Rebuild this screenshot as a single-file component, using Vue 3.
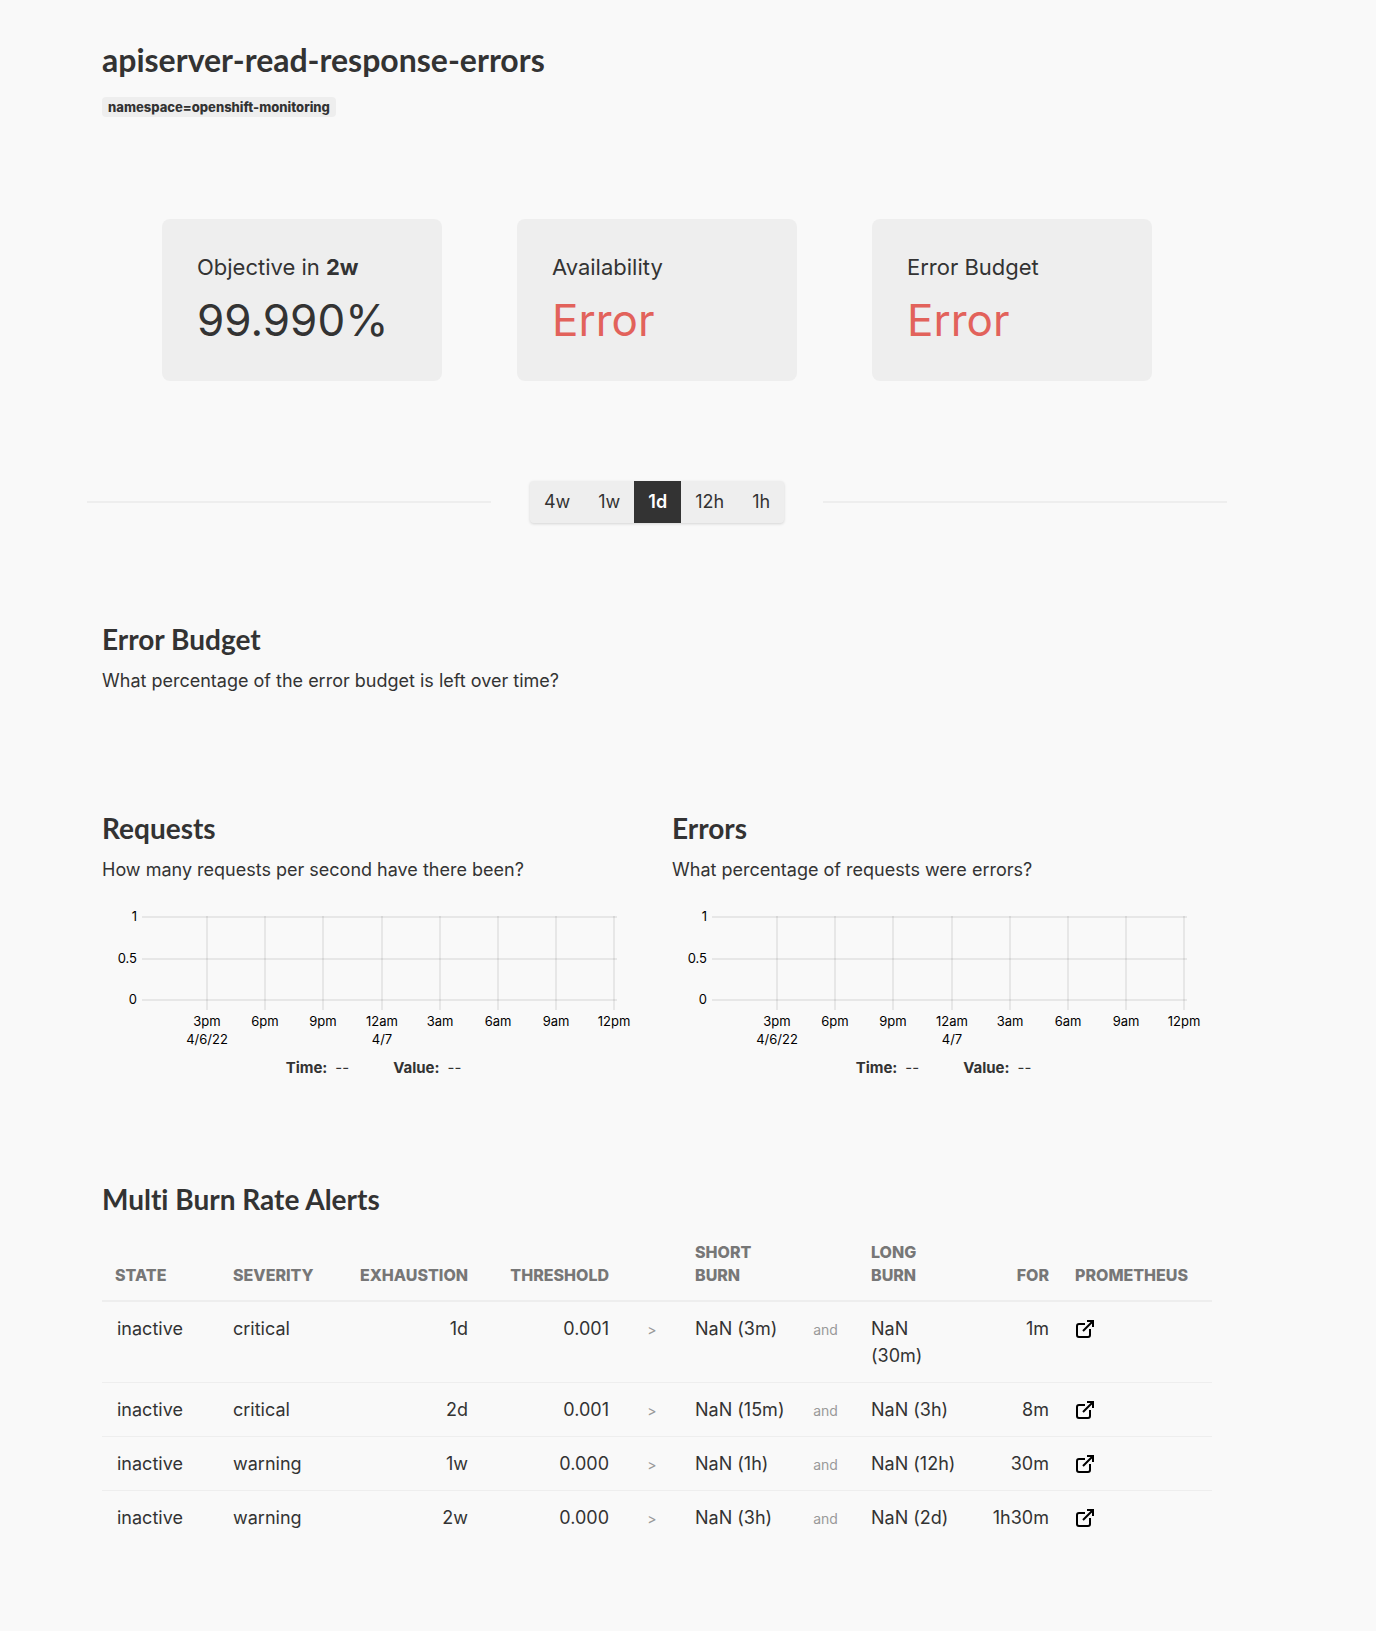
<script setup>
import { ref } from 'vue'

const tiles = [
  { label: 'Objective in', strong: '2w', value: '99.990%', failed: false },
  { label: 'Availability', strong: '', value: 'Error', failed: true },
  { label: 'Error Budget', strong: '', value: 'Error', failed: true },
]

const ranges = ['4w', '1w', '1d', '12h', '1h']
const range = ref('1d')

const charts = [
  { title: 'Requests', text: 'How many requests per second have there been?' },
  { title: 'Errors', text: 'What percentage of requests were errors?' },
]

const yTicks = [
  { y: 17, label: '1' },
  { y: 59, label: '0.5' },
  { y: 100, label: '0' },
]

const xTicks = [
  { x: 105, label: '3pm', date: '4/6/22' },
  { x: 163, label: '6pm' },
  { x: 221, label: '9pm' },
  { x: 280, label: '12am', date: '4/7' },
  { x: 338, label: '3am' },
  { x: 396, label: '6am' },
  { x: 454, label: '9am' },
  { x: 512, label: '12pm' },
]

const alerts = [
  { state: 'inactive', severity: 'critical', exhaustion: '1d', threshold: '0.001', short: 'NaN (3m)', long: 'NaN (30m)', wait: '1m' },
  { state: 'inactive', severity: 'critical', exhaustion: '2d', threshold: '0.001', short: 'NaN (15m)', long: 'NaN (3h)', wait: '8m' },
  { state: 'inactive', severity: 'warning', exhaustion: '1w', threshold: '0.000', short: 'NaN (1h)', long: 'NaN (12h)', wait: '30m' },
  { state: 'inactive', severity: 'warning', exhaustion: '2w', threshold: '0.000', short: 'NaN (3h)', long: 'NaN (2d)', wait: '1h30m' },
]
</script>

<template>
  <div class="page">
    <main class="container">
      <header class="head">
        <h1>apiserver-read-response-errors</h1>
        <span class="badge">namespace=openshift-monitoring</span>
      </header>

      <section class="tiles">
        <div v-for="tile in tiles" :key="tile.label" class="tile">
          <h6>{{ tile.label }} <strong v-if="tile.strong">{{ tile.strong }}</strong></h6>
          <p :class="{ failed: tile.failed }">{{ tile.value }}</p>
        </div>
      </section>

      <section class="timerange">
        <hr />
        <div class="group">
          <button
            v-for="item in ranges"
            :key="item"
            type="button"
            :class="{ active: item === range }"
            @click="range = item"
          >{{ item }}</button>
        </div>
        <hr />
      </section>

      <section class="block budget">
        <h4>Error Budget</h4>
        <p>What percentage of the error budget is left over time?</p>
      </section>

      <div class="charts">
        <section v-for="chart in charts" :key="chart.title">
          <h4>{{ chart.title }}</h4>
          <p>{{ chart.text }}</p>
          <svg class="plot" viewBox="0 0 540 150" role="img" :aria-label="chart.title">
            <g class="grid">
              <line v-for="t in yTicks" :key="t.label" x1="40" x2="515" :y1="t.y" :y2="t.y" />
              <line v-for="t in xTicks" :key="t.label" y1="16" y2="110" :x1="t.x" :x2="t.x" />
            </g>
            <text v-for="t in yTicks" :key="t.label" class="y" x="35" :y="t.y + 4">{{ t.label }}</text>
            <g v-for="t in xTicks" :key="t.label" class="x">
              <text :x="t.x" y="126">{{ t.label }}</text>
              <text v-if="t.date" :x="t.x" y="144">{{ t.date }}</text>
            </g>
          </svg>
          <div class="legend">
            <span><b>Time:</b>--</span>
            <span><b>Value:</b>--</span>
          </div>
        </section>
      </div>

      <section class="block alerts">
        <h4>Multi Burn Rate Alerts</h4>
        <table>
          <colgroup>
            <col class="c-state" /><col class="c-severity" /><col class="c-exhaustion" /><col class="c-threshold" />
            <col class="c-gt" /><col class="c-short" /><col class="c-and" /><col class="c-long" /><col class="c-for" />
            <col class="c-prometheus" />
          </colgroup>
          <thead>
            <tr>
              <th>State</th>
              <th>Severity</th>
              <th class="right">Exhaustion</th>
              <th class="right">Threshold</th>
              <th></th>
              <th>Short<br />Burn</th>
              <th></th>
              <th>Long<br />Burn</th>
              <th class="right">For</th>
              <th>Prometheus</th>
            </tr>
          </thead>
          <tbody>
            <tr v-for="(a, i) in alerts" :key="i">
              <td class="state">{{ a.state }}</td>
              <td>{{ a.severity }}</td>
              <td class="right">{{ a.exhaustion }}</td>
              <td class="right">{{ a.threshold }}</td>
              <td class="joiner">&gt;</td>
              <td class="short">{{ a.short }}</td>
              <td class="joiner">and</td>
              <td>{{ a.long }}</td>
              <td class="right">{{ a.wait }}</td>
              <td>
                <a href="#" aria-label="Open in Prometheus">
                  <svg viewBox="0 0 20 20" width="20" height="20">
                    <path d="M10 5H4Q2 5 2 7V16Q2 18 4 18H13Q15 18 15 16V10M12 2H18V8M18 2L8 12" />
                  </svg>
                </a>
              </td>
            </tr>
          </tbody>
        </table>
      </section>
    </main>
  </div>
</template>

<style>
body {
  margin: 0;
  background: #f9f9f9;
}
</style>

<style scoped>
* {
  box-sizing: border-box;
}
.page {
  padding: 39px 62px 86px 0;
  color: #333;
  font: 18px/27px Inter, sans-serif;
}
.container {
  max-width: 1140px;
  margin: 0 auto;
}
h1, h4, h6, p {
  margin: 0;
}
h1, h4 {
  font-family: Lato, sans-serif;
  font-weight: 700;
  font-variant-ligatures: none;
}
h1 {
  font-size: 32px;
  line-height: 42px;
}
h4 {
  font-size: 28px;
  line-height: 34px;
  margin-bottom: 10px;
}
.head, .block {
  padding: 0 15px;
}
.badge {
  display: block;
  width: fit-content;
  margin-top: 16px;
  padding: 0 6px;
  border-radius: 4px;
  background: #eee;
  font-size: 13px;
  font-weight: 800;
  line-height: 20px;
}
.tiles {
  display: flex;
  justify-content: center;
  gap: 75px;
  margin-top: 102px;
}
.tile {
  width: 280px;
  height: 162px;
  padding: 32px 35px;
  border-radius: 8px;
  background: #eee;
}
.tile h6 {
  font-size: 22px;
  font-weight: 400;
  line-height: 32px;
}
.tile p {
  margin-top: 9px;
  font-size: 44px;
  line-height: 56px;
}
.tile .failed {
  color: #e2625b;
}
.timerange {
  display: flex;
  align-items: center;
  justify-content: space-between;
  margin-top: 100px;
}
hr {
  width: 404px;
  height: 2px;
  margin: 0;
  border: 0;
  background: #eee;
}
.group {
  display: flex;
  overflow: hidden;
  border-radius: 4px;
  background: #eee;
  box-shadow: 0 1px 3px rgba(0, 0, 0, 0.15);
}
button {
  height: 42px;
  padding: 0 14px 1px;
  border: 0;
  background: transparent;
  color: #333;
  font: 18px/27px Inter, sans-serif;
}
button.active {
  background: #333;
  color: #fff;
  font-weight: 600;
}
.budget {
  margin-top: 99px;
}
.budget h4, .charts h4 {
  margin-bottom: 11px;
}
.charts {
  display: grid;
  grid-template-columns: 1fr 1fr;
  gap: 30px;
  margin-top: 117px;
  padding: 0 15px;
}
.plot {
  display: block;
  width: 100%;
  margin-top: 17px;
  overflow: visible;
}
.grid line {
  stroke: rgba(0, 0, 0, 0.07);
  stroke-width: 2;
}
.plot text {
  fill: #000;
  font-size: 13px;
}
.plot .y {
  text-anchor: end;
}
.plot .x {
  text-anchor: middle;
}
.legend {
  display: flex;
  justify-content: center;
  gap: 44px;
  margin-top: 4px;
  padding-left: 3px;
  font-size: 15px;
}
.legend b {
  margin-right: 8px;
}
.alerts {
  margin-top: 101px;
}
table {
  width: 100%;
  table-layout: fixed;
  border-collapse: collapse;
}
.c-state { width: 118px; }
.c-severity { width: 125px; }
.c-exhaustion { width: 136px; }
.c-threshold { width: 141px; }
.c-gt { width: 60px; }
.c-short { width: 111px; }
.c-and { width: 65px; }
.c-long { width: 111px; }
.c-for { width: 93px; }
.c-prometheus { width: 150px; }
th {
  padding: 15px 13px 13px;
  border-bottom: 2px solid #eee;
  color: #777;
  font-size: 16px;
  font-weight: 800;
  line-height: 23px;
  text-align: left;
  text-transform: uppercase;
  vertical-align: bottom;
}
td {
  padding: 13px;
  border-bottom: 1px solid #eee;
  vertical-align: top;
}
tr:last-child td {
  border-bottom: 0;
}
.right {
  text-align: right;
}
td.state {
  padding-left: 15px;
}
td.short {
  white-space: nowrap;
}
td.joiner {
  padding-top: 14px;
  color: #999;
  font-size: 14px;
  text-align: center;
}
td a {
  display: flex;
  align-items: center;
  height: 27px;
}
td svg {
  fill: none;
  stroke: #000;
  stroke-width: 2;
}
/* keeps single-line rows at the text height despite the lowered joiner */
td.joiner {
  padding-bottom: 12px;
}
</style>
